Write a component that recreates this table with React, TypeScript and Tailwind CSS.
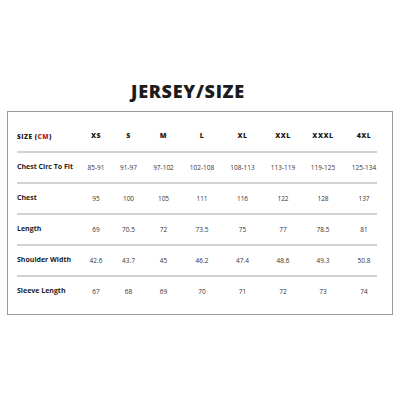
import React from "react";

const sizes = ["XS", "S", "M", "L", "XL", "XXL", "XXXL", "4XL"];

const rows: { label: string; values: string[] }[] = [
  { label: "Chest Circ To Fit", values: ["85-91", "91-97", "97-102", "102-108", "108-113", "113-119", "119-125", "125-134"] },
  { label: "Chest", values: ["95", "100", "105", "111", "116", "122", "128", "137"] },
  { label: "Length", values: ["69", "70.5", "72", "73.5", "75", "77", "78.5", "81"] },
  { label: "Shoulder Width", values: ["42.6", "43.7", "45", "46.2", "47.4", "48.6", "49.3", "50.8"] },
  { label: "Sleeve Length", values: ["67", "68", "69", "70", "71", "72", "73", "74"] },
];

const cols = "grid grid-cols-[63px_32px_33px_37px_40px_41px_40px_40px_42px] items-center h-[29px]";

const App = () => {
  return (
    <div className="w-[400px] h-[400px] bg-white pt-[82px] font-['Open_Sans',sans-serif] text-[#1c1c1c]">
      {/* Titel */}
      <h1 className="text-center text-[18px] leading-[18px] font-extrabold tracking-[0.7px] pr-[24px]">
        JERSEY/SIZE
      </h1>

      {/* Tabel ukuran */}
      <div className="mt-[11px] mx-[7px] border border-[#9a9a9a] pt-[10px] pb-[8px] pl-[9px] h-[204px]">
        <div className={cols}>
          <p className="text-[6.5px] font-extrabold tracking-[0.5px]">
            SIZE (<span className="text-[#c0272d]">CM</span>)
          </p>
          {sizes.map((item, index) => (
            <p key={index} className="text-center text-[7px] font-extrabold tracking-[0.5px]">
              {item}
            </p>
          ))}
        </div>
        {rows.map((row, index) => (
          <div key={index}>
            <div className="h-[2px] w-[360px] bg-[#d2d2d2]" />
            <div className={cols}>
              <p className="text-[7px] font-bold whitespace-nowrap">{row.label}</p>
              {row.values.map((val, i) => (
                <p key={i} className="text-center text-[6.5px] text-[#333]">
                  {val}
                </p>
              ))}
            </div>
          </div>
        ))}
      </div>
    </div>
  );
};

export default App;
